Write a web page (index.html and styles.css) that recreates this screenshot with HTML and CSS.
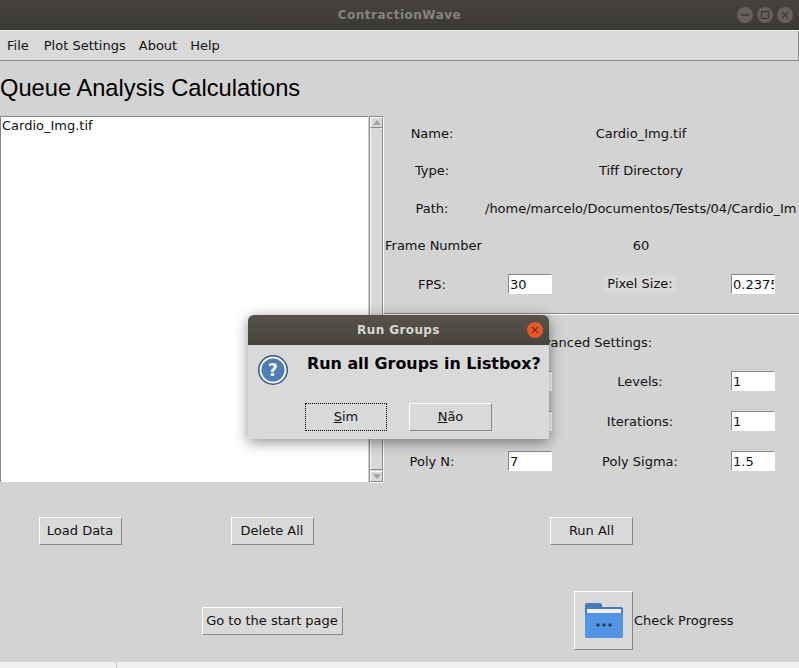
FILE: index.html
```html
<!DOCTYPE html>
<html lang="en">
<head>
    <meta charset="UTF-8">
    <title>ContractionWave</title>
    <link rel="stylesheet" href="styles.css">
</head>
<body>
    <div class="window">
        <div class="titlebar">
            <span class="title-text">ContractionWave</span>
            <div class="win-buttons">
                <svg width="16" height="16" viewBox="0 0 16 16"><circle cx="8" cy="8" r="8" fill="#64615c"></circle><line x1="4" y1="8" x2="12" y2="8" stroke="#3e3b37" stroke-width="1.4"></line></svg>
                <svg width="16" height="16" viewBox="0 0 16 16"><circle cx="8" cy="8" r="8" fill="#64615c"></circle><rect x="4.5" y="4.5" width="7" height="7" fill="none" stroke="#3e3b37" stroke-width="1.2"></rect></svg>
                <svg width="16" height="16" viewBox="0 0 16 16"><circle cx="8" cy="8" r="8" fill="#64615c"></circle><path d="M5 5l6 6M11 5l-6 6" stroke="#3e3b37" stroke-width="1.2"></path></svg>
            </div>
        </div>

        <div class="menubar">
            <span class="menu-file">File</span>
            <span>Plot Settings</span>
            <span>About</span>
            <span>Help</span>
        </div>

        <h1 class="page-title">Queue Analysis Calculations</h1>

        <div class="main">
            <div class="list-side">
                <div class="listbox">Cardio_Img.tif</div>
                <div class="scrollbar">
                    <div class="scroll-btn"><span class="arrow-up"></span></div>
                    <div class="scroll-thumb"></div>
                    <div class="scroll-btn"><span class="arrow-down"></span></div>
                </div>
            </div>

            <div class="settings">
                <div class="info-grid">
                    <span>Name:</span>
                    <span class="value">Cardio_Img.tif</span>
                    <span>Type:</span>
                    <span class="value">Tiff Directory</span>
                    <span>Path:</span>
                    <span class="value path">/home/marcelo/Documentos/Tests/04/Cardio_Im</span>
                    <span class="frame-label">Frame Number</span>
                    <span class="value">60</span>
                    <span>FPS:</span>
                    <input class="field" type="text" value="30">
                    <span class="lighter">Pixel Size:</span>
                    <input class="field field-right" type="text" value="0.2375">
                </div>

                <div class="advanced-grid">
                    <span class="advanced-title">Advanced Settings:</span>
                    <span></span>
                    <input class="field" type="text">
                    <span>Levels:</span>
                    <input class="field field-right" type="text" value="1">
                    <span></span>
                    <input class="field" type="text">
                    <span>Iterations:</span>
                    <input class="field field-right" type="text" value="1">
                    <span>Poly N:</span>
                    <input class="field" type="text" value="7">
                    <span>Poly Sigma:</span>
                    <input class="field field-right" type="text" value="1.5">
                </div>
            </div>
        </div>

        <div class="bottom">
            <button class="btn">Load Data</button>
            <button class="btn">Delete All</button>
            <button class="btn run-all">Run All</button>
            <span></span>
            <button class="btn start-page">Go to the start page</button>
            <div class="progress">
                <button class="btn icon-btn">
                    <svg width="38" height="35" viewBox="0 0 38 35">
                        <path d="M0 2a2 2 0 0 1 2-2h13a2 2 0 0 1 2 2v2h19a2 2 0 0 1 2 2v8H0z" fill="#4a7ab5"></path>
                        <rect x="2" y="6" width="34" height="5" fill="#eef1f4"></rect>
                        <path d="M0 10h38v23a2 2 0 0 1-2 2H2a2 2 0 0 1-2-2z" fill="#5294e2"></path>
                        <circle cx="13" cy="22" r="1.8" fill="#2a3f5c"></circle>
                        <circle cx="19" cy="22" r="1.8" fill="#2a3f5c"></circle>
                        <circle cx="25" cy="22" r="1.8" fill="#2a3f5c"></circle>
                    </svg>
                </button>
                <span>Check Progress</span>
            </div>
        </div>

        <!-- Message box over the window -->
        <div class="dialog">
            <div class="dialog-title">
                <span>Run Groups</span>
                <svg class="dialog-close" width="16" height="16" viewBox="0 0 16 16"><circle cx="8" cy="8" r="8" fill="#e6572a"></circle><path d="M5.2 5.2l5.6 5.6M10.8 5.2l-5.6 5.6" stroke="#6e2a14" stroke-width="1.2"></path></svg>
            </div>
            <div class="dialog-body">
                <svg class="question" width="32" height="32" viewBox="0 0 32 32">
                    <circle cx="16" cy="16" r="15" fill="#2f5a94"></circle>
                    <circle cx="16" cy="16" r="13.5" fill="#fff"></circle>
                    <circle cx="16" cy="16" r="11.5" fill="#4f7db5"></circle>
                    <text x="16" y="22" text-anchor="middle" class="question-mark">?</text>
                </svg>
                <p class="dialog-msg">Run all Groups in Listbox?</p>
            </div>
            <div class="dialog-buttons">
                <button class="btn dialog-btn focused"><u>S</u>im</button>
                <button class="btn dialog-btn"><u>N</u>ão</button>
            </div>
        </div>
    </div>

    <div class="behind">
        <div class="behind-left"></div>
    </div>
</body>
</html>
```

FILE: styles.css
```css
html, body {
    margin: 0;
    padding: 0;
    height: 668px;
    overflow: hidden;
}

body {
    font-family: "DejaVu Sans", sans-serif;
    font-size: 13px;
    color: #111;
    background-color: #f0f0f0;
}

.window {
    position: relative;
    width: 799px;
    height: 662px;
    overflow: hidden;
    background-color: #d3d3d3;
}

/* Title bar */
.titlebar {
    height: 30px;
    display: flex;
    align-items: center;
    justify-content: center;
    position: relative;
    background: linear-gradient(#46433e, #3b3935);
    border-bottom: 1px solid #f4f4f4;
}

.title-text {
    font-weight: bold;
    font-size: 12px;
    letter-spacing: 0.5px;
    color: #85837f;
}

.win-buttons {
    position: absolute;
    top: 7px;
    right: 6px;
    display: flex;
    gap: 4px;
}

.win-buttons svg {
    display: block;
}

/* Menu */
.menubar {
    height: 30px;
    display: flex;
    align-items: center;
    gap: 13px;
    padding-left: 7px;
    padding-bottom: 1px;
    box-sizing: border-box;
    background-color: #d9d9d9;
    border-bottom: 1px solid #888;
    border-right: 1px solid #888;
}

.menu-file {
    margin-right: 2px;
}

.page-title {
    height: 55px;
    line-height: 54px;
    margin: 0;
    font-family: "Liberation Sans", Arial, sans-serif;
    font-size: 23.7px;
    font-weight: normal;
    color: #000;
}

.main {
    display: grid;
    grid-template-columns: 384px 415px;
    height: 366px;
}

.list-side {
    display: flex;
    justify-content: space-between;
    height: 367px;
}

.listbox {
    width: 368px;
    height: 366px;
    padding-left: 1px;
    line-height: 18px;
    background-color: #fff;
    border-top: 1px solid #888;
    border-left: 1px solid #888;
    box-sizing: border-box;
}

.scrollbar {
    width: 15px;
    height: 367px;
    display: flex;
    flex-direction: column;
    box-sizing: border-box;
    background-color: #d9d9d9;
    border-top: 1px solid #888;
    border-left: 1px solid #888;
    border-right: 1px solid #fff;
    border-bottom: 1px solid #fff;
}

.scroll-btn {
    height: 11px;
    display: flex;
    align-items: center;
    justify-content: center;
    border-top: 1px solid #fff;
    border-left: 1px solid #fff;
    border-right: 1px solid #888;
    border-bottom: 1px solid #888;
    box-sizing: border-box;
}

.arrow-up {
    border-left: 4px solid transparent;
    border-right: 4px solid transparent;
    border-bottom: 5px solid #a3a3a3;
}

.arrow-down {
    border-left: 4px solid transparent;
    border-right: 4px solid transparent;
    border-top: 5px solid #a3a3a3;
}

.scroll-thumb {
    flex: 1;
    margin-top: 1px;
    margin-bottom: 1px;
    border-left: 1px solid #fff;
    border-right: 1px solid #888;
    border-bottom: 1px solid #888;
}

/* Settings side */
.settings {
    display: flex;
    flex-direction: column;
}

.info-grid,
.advanced-grid {
    display: grid;
    grid-template-columns: 96px 100px 120px 99px;
    align-items: center;
    justify-items: center;
    white-space: nowrap;
}

.info-grid {
    grid-template-rows: 34px 40px 36px 38px 40px;
    padding-bottom: 9px;
    border-bottom: 1px solid #888;
    box-shadow: 0 1px 0 #fff;
}

.advanced-grid {
    grid-template-rows: 47px 40px 40px 40px;
}

.info-grid .value {
    grid-column: 2 / 5;
    margin-left: 3px;
}

.info-grid .path {
    justify-self: start;
    margin-left: 5px;
}

.frame-label {
    justify-self: start;
    margin-left: 1px;
}

.lighter {
    padding: 0 3px;
    line-height: 18px;
    background-color: #d9d9d9;
}

.advanced-title {
    grid-column: 1 / 5;
    justify-self: start;
    padding-top: 10px;
    margin-left: 142px;
}

.field {
    width: 44px;
    height: 20px;
    box-sizing: border-box;
    padding: 0 0 0 1px;
    margin: 0;
    font-family: inherit;
    font-size: 13px;
    color: #111;
    background-color: #fff;
    border: 1px solid #fff;
    border-top-color: #888;
    border-left-color: #888;
    border-radius: 0;
    outline: none;
}

.field-right {
    justify-self: start;
    margin-left: 31px;
}

/* Buttons */
.btn {
    height: 28px;
    padding: 0 0 2px;
    font-family: inherit;
    font-size: 13px;
    color: #111;
    white-space: nowrap;
    background-color: #d9d9d9;
    border: 1px solid #fff;
    border-right-color: #888;
    border-bottom-color: #888;
    border-radius: 0;
}

.bottom {
    display: grid;
    grid-template-columns: 160px 224px 415px;
    grid-template-rows: 63px 105px;
    justify-items: center;
    align-items: end;
}

.bottom .btn {
    width: 83px;
}

.bottom .run-all {
    justify-self: start;
    margin-left: 166px;
}

.bottom .start-page {
    width: 141px;
    margin-bottom: 15px;
}

.progress {
    justify-self: start;
    display: flex;
    align-items: center;
    gap: 1px;
    margin-left: 190px;
}

.bottom .icon-btn {
    width: 59px;
    height: 59px;
    padding: 0;
    display: flex;
    align-items: center;
    justify-content: center;
}

/* Dialog */
.dialog {
    position: absolute;
    left: 248px;
    top: 315px;
    width: 301px;
    height: 124px;
    background-color: #d9d9d9;
    border-radius: 6px 6px 0 0;
    box-shadow: 0 3px 14px rgba(0, 0, 0, 0.45);
}

.dialog-title {
    position: relative;
    height: 30px;
    display: flex;
    align-items: center;
    justify-content: center;
    font-weight: bold;
    font-size: 12px;
    letter-spacing: 0.4px;
    color: #d8d6d0;
    border-radius: 6px 6px 0 0;
    background: linear-gradient(#57534b, #47443e);
}

.dialog-close {
    position: absolute;
    top: 7px;
    right: 6px;
}

.dialog-body {
    position: relative;
    height: 58px;
}

.question {
    position: absolute;
    left: 9px;
    top: 9px;
}

.question-mark {
    font-family: "DejaVu Sans", sans-serif;
    font-weight: bold;
    font-size: 17px;
    fill: #fff;
}

.dialog-msg {
    margin: 0;
    padding: 9px 0 0 59px;
    font-weight: bold;
    font-size: 15.9px;
    color: #000;
    white-space: nowrap;
}

.dialog-buttons {
    display: flex;
    gap: 22px;
    padding-left: 57px;
}

.dialog-btn {
    width: 83px;
}

.dialog-btn.focused {
    width: 82px;
    border: 1px dotted #000;
}

/* Window behind, along the bottom edge */
.behind {
    height: 6px;
}

.behind-left {
    width: 116px;
    height: 6px;
    border-right: 1px solid #c8c8c8;
}
```
